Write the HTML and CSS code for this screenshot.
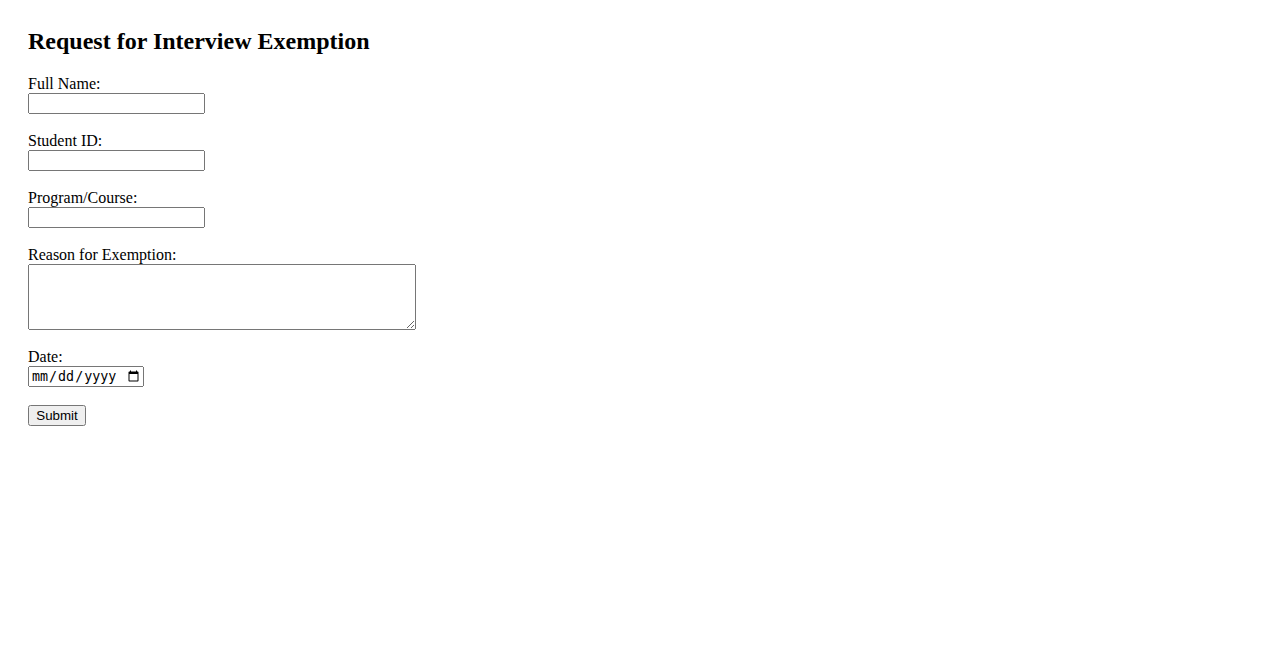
FILE: index.html
```html
<!DOCTYPE html>
<html lang="en">
<head>
<meta charset="utf-8">
<title>Request for Interview Exemption</title>
<link rel="stylesheet" href="styles.css">
</head>
<body class="page">
<h2 class="title">Request for Interview Exemption</h2>
<form class="form">
<label for="name">Full Name:</label><br>
<input class="field" type="text" id="name" name="name"><br><br>
<label for="sid">Student ID:</label><br>
<input class="field" type="text" id="sid" name="sid"><br><br>
<label for="program">Program/Course:</label><br>
<input class="field" type="text" id="program" name="program"><br><br>
<label for="reason">Reason for Exemption:</label><br>
<textarea class="area" id="reason" name="reason" rows="4" cols="50"></textarea><br><br>
<label for="date">Date:</label><br>
<input class="date" type="date" id="date" name="date"><br><br>
<input class="submit" type="submit" value="Submit">
</form>
</body>
</html>
```

FILE: styles.css
```css
.page {
  margin: 0;
  padding: 8px 28px;
  font-family: "Liberation Serif", "Times New Roman", serif;
  background: #fff;
  color: #000;
}
.title {
  font-size: 1.5em;
  margin: 20px 0;
}
.field {
  box-sizing: border-box;
  width: 177px;
  height: 21px;
}
.area {
  box-sizing: border-box;
  width: 388px;
  height: 66px;
  vertical-align: top;
}
.date {
  box-sizing: border-box;
  width: 116px;
  height: 21px;
}
.submit {
  box-sizing: border-box;
  width: 58px;
  height: 21px;
  font-family: "Liberation Sans", Arial, sans-serif;
  font-size: 13.333px;
}
```
